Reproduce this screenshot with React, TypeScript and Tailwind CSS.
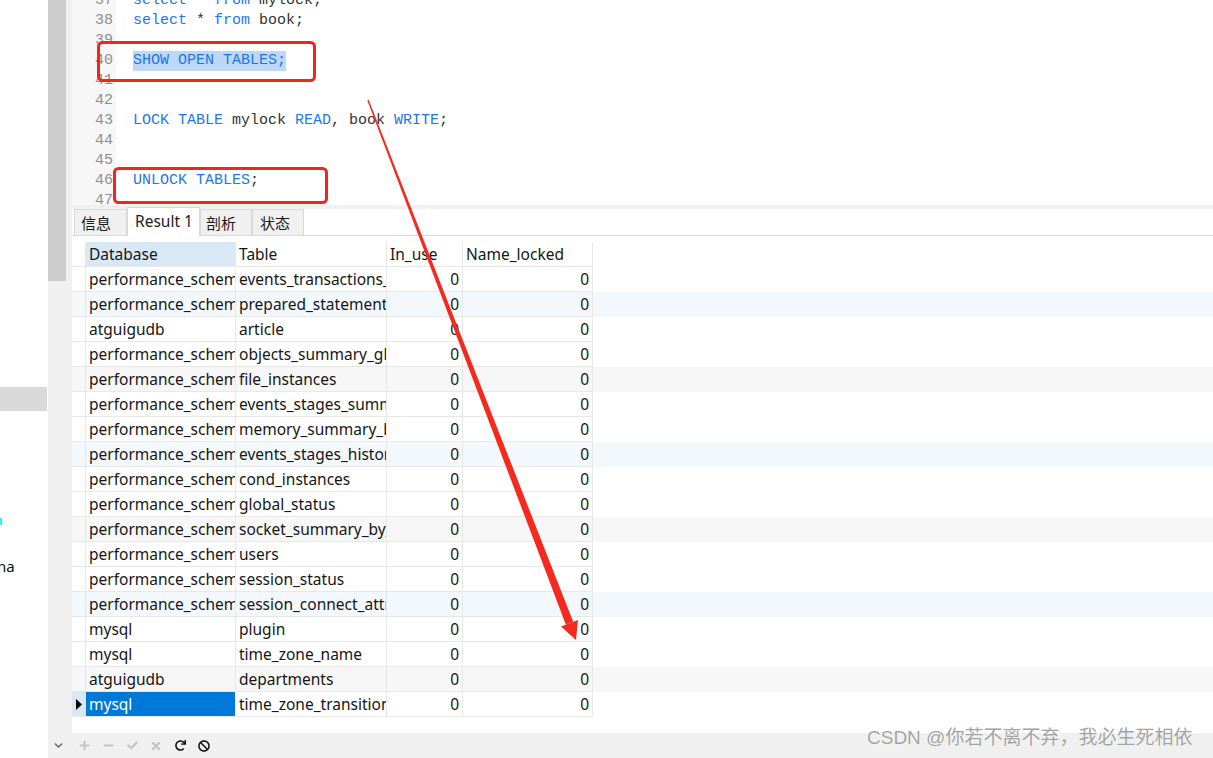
import React from "react";
import { ChevronDown } from "lucide-react";
import { FaPlus, FaMinus, FaCheck, FaTimes, FaRedo, FaBan } from "react-icons/fa";

const mono = "font-['Liberation_Mono','DejaVu_Sans_Mono',monospace]";
const ui = "font-['Noto_Sans','Noto_Sans_CJK_SC',sans-serif]";

type Tok = { t: string; kw?: boolean; sel?: boolean };

const code: { n: number; toks: Tok[] }[] = [
  { n: 37, toks: [{ t: "select", kw: true }, { t: " * " }, { t: "from", kw: true }, { t: " mylock;" }] },
  { n: 38, toks: [{ t: "select", kw: true }, { t: " * " }, { t: "from", kw: true }, { t: " book;" }] },
  { n: 39, toks: [] },
  { n: 40, toks: [{ t: "SHOW OPEN TABLES;", kw: true, sel: true }] },
  { n: 41, toks: [] },
  { n: 42, toks: [] },
  {
    n: 43,
    toks: [
      { t: "LOCK TABLE", kw: true },
      { t: " mylock " },
      { t: "READ", kw: true },
      { t: ", book " },
      { t: "WRITE", kw: true },
      { t: ";" },
    ],
  },
  { n: 44, toks: [] },
  { n: 45, toks: [] },
  { n: 46, toks: [{ t: "UNLOCK TABLES", kw: true }, { t: ";" }] },
  { n: 47, toks: [] },
];

const rows: [string, string][] = [
  ["performance_schema", "events_transactions_summary_global_by_event_name"],
  ["performance_schema", "prepared_statements_instances"],
  ["atguigudb", "article"],
  ["performance_schema", "objects_summary_global_by_type"],
  ["performance_schema", "file_instances"],
  ["performance_schema", "events_stages_summary_by_thread_by_event_name"],
  ["performance_schema", "memory_summary_by_thread_by_event_name"],
  ["performance_schema", "events_stages_history"],
  ["performance_schema", "cond_instances"],
  ["performance_schema", "global_status"],
  ["performance_schema", "socket_summary_by_instance"],
  ["performance_schema", "users"],
  ["performance_schema", "session_status"],
  ["performance_schema", "session_connect_attrs"],
  ["mysql", "plugin"],
  ["mysql", "time_zone_name"],
  ["atguigudb", "departments"],
  ["mysql", "time_zone_transition"],
];

function rowBg(i: number) {
  const k = (i + 1) % 6;
  if (k === 2) return "bg-[#f3f8fd]";
  if (k === 5) return "bg-[#f7f7f7]";
  return "bg-white";
}

function Editor() {
  return (
    <div className="h-[205px] overflow-hidden bg-white">
      <div className="-mt-[9px]">
        {code.map((l) => (
          <div key={l.n} className={`flex h-[20px] ${mono} text-[15px] leading-[20px]`}>
            <div className="w-[44px] shrink-0 bg-[#f7f7f7] pr-[3px] text-right text-[#8f8f8f]">{l.n}</div>
            <div className="whitespace-pre pl-[17px] text-[#333333]">
              {l.toks.map((tk, i) => (
                <span
                  key={i}
                  className={`${tk.kw ? "text-[#1f76ea]" : ""} ${tk.sel ? "inline-block h-[20px] bg-[#bdd8f6]" : ""}`}
                >
                  {tk.t}
                </span>
              ))}
            </div>
          </div>
        ))}
      </div>
    </div>
  );
}

function Tabs() {
  const tab = "h-[26px] border border-b-0 border-[#d9d9d9] bg-[#f0f0f0] leading-[26px]";
  return (
    <div className="flex h-[27px] items-end border-b border-[#d9d9d9] pl-[2px] text-[15px] text-[#1b1b1b]">
      <div className={`${tab} w-[53px] pl-[6px] font-['Noto_Sans_CJK_SC',sans-serif]`}>信息</div>
      <div className={`-mb-px h-[29px] w-[73px] border border-b-0 border-[#d9d9d9] bg-white pl-[7px] leading-[26px] ${ui} text-[15.5px]`}>
        Result 1
      </div>
      <div className={`${tab} w-[52px] pl-[5px] font-['Noto_Sans_CJK_SC',sans-serif]`}>剖析</div>
      <div className={`${tab} w-[52px] pl-[7px] font-['Noto_Sans_CJK_SC',sans-serif]`}>状态</div>
    </div>
  );
}

function Grid() {
  const cell = "h-[25px] shrink-0 overflow-hidden whitespace-nowrap border-b border-r border-[#e8e8e8] leading-[24px]";
  return (
    <div className={`pt-[6px] ${ui} text-[15.5px] text-[#161616]`}>
      <div className="flex">
        <div className={`${cell} w-[14px] border-[#e3e3e3]`} />
        <div className={`${cell} w-[150px] border-[#e3e3e3] bg-[#d9e8f7] pl-[3px]`}>Database</div>
        <div className={`${cell} w-[151px] border-[#e3e3e3] pl-[3px]`}>Table</div>
        <div className={`${cell} w-[76px] border-[#e3e3e3] pl-[3px]`}>In_use</div>
        <div className={`${cell} w-[130px] border-[#e3e3e3] pl-[3px]`}>Name_locked</div>
      </div>
      {rows.map(([db, tb], i) => {
        const sel = i === rows.length - 1;
        const bg = sel ? "bg-white" : rowBg(i);
        return (
          <div key={i} className={`flex ${bg}`}>
            <div className={`${cell} w-[14px] ${sel ? "bg-[#d9e8f7]" : ""} flex items-center justify-end pr-[3px]`}>
              {sel && (
                <svg width="6" height="11" viewBox="0 0 6 11">
                  <path d="M0 0 L6 5.5 L0 11 Z" fill="#000" />
                </svg>
              )}
            </div>
            <div className={`${cell} w-[150px] pl-[3px] ${sel ? "bg-[#0078d7] text-white" : ""}`}>{db}</div>
            <div className={`${cell} w-[151px] pl-[3px]`}>{tb}</div>
            <div className={`${cell} w-[76px] pr-[3px] text-right`}>0</div>
            <div className={`${cell} w-[130px] pr-[3px] text-right`}>0</div>
          </div>
        );
      })}
    </div>
  );
}

function Toolbar() {
  const slot = "flex w-[24px] justify-center";
  return (
    <div className="flex h-[25px] items-center bg-[#f0f0f0]">
      <div className="flex w-[20px] justify-center">
        <ChevronDown size={13} strokeWidth={2.5} color="#555" />
      </div>
      <div className="w-[4px]" />
      <div className={slot}><FaPlus size={11} color="#c4c4c4" /></div>
      <div className={slot}><FaMinus size={11} color="#c4c4c4" /></div>
      <div className={slot}><FaCheck size={11} color="#c4c4c4" /></div>
      <div className={slot}><FaTimes size={12} color="#c4c4c4" /></div>
      <div className={slot}><FaRedo size={11} color="#111" /></div>
      <div className={slot}><FaBan size={12} color="#111" /></div>
    </div>
  );
}

function Annotations() {
  // tapered arrow from (368,100) to tip (576,640)
  return (
    <svg className="pointer-events-none absolute left-0 top-0" width="1213" height="758">
      <rect x="98.5" y="42.5" width="216" height="38" rx="4" fill="none" stroke="#f0261d" strokeWidth="3" />
      <rect x="114.5" y="168.5" width="212" height="34" rx="4" fill="none" stroke="#f0261d" strokeWidth="3" />
      <polygon points="368.7,99.7 367.3,100.3 565.8,624.6 573.2,621.8" fill="#f42a1f" />
      <polygon points="576,640 561,626.6 578,620" fill="#f42a1f" />
    </svg>
  );
}

export default function App() {
  return (
    <div className="relative flex h-[758px] w-[1213px] overflow-hidden bg-white">
      {/* left tree panel, mostly cut off */}
      <div className={`w-[48px] shrink-0 bg-white ${ui}`}>
        <div className="h-[387px]" />
        <div className="h-[24px] w-[47px] bg-[#d9d9d9]" />
        <div className="h-[107px]" />
        <div className="h-[7px] w-[2px] bg-[#40e4ff]" />
        <div className="-ml-[3px] mt-[31px] h-[20px] text-[15px] leading-[20px] text-[#111]">na</div>
      </div>

      <div className="flex min-w-0 flex-1 flex-col">
        <div className="flex min-h-0 flex-1">
          <div className="w-[24px] shrink-0 bg-[#f0f0f0]">
            <div className="h-[281px] w-[18px] bg-[#cdcdcd]" />
          </div>
          <div className="flex min-w-0 flex-1 flex-col bg-white">
            <Editor />
            <div className="h-[4px] bg-[#f0f0f0]" />
            <Tabs />
            <Grid />
          </div>
        </div>
        <Toolbar />
      </div>

      <Annotations />

      <div className="pointer-events-none absolute left-[867px] top-[727px] whitespace-nowrap font-['Liberation_Sans','Noto_Sans_CJK_SC',sans-serif] text-[19px] leading-[22px] text-[#a3a3a3] [text-shadow:0_0_1px_#ffffff,0_0_1px_#ffffff]">
        CSDN @你若不离不弃，我必生死相依
      </div>
    </div>
  );
}
